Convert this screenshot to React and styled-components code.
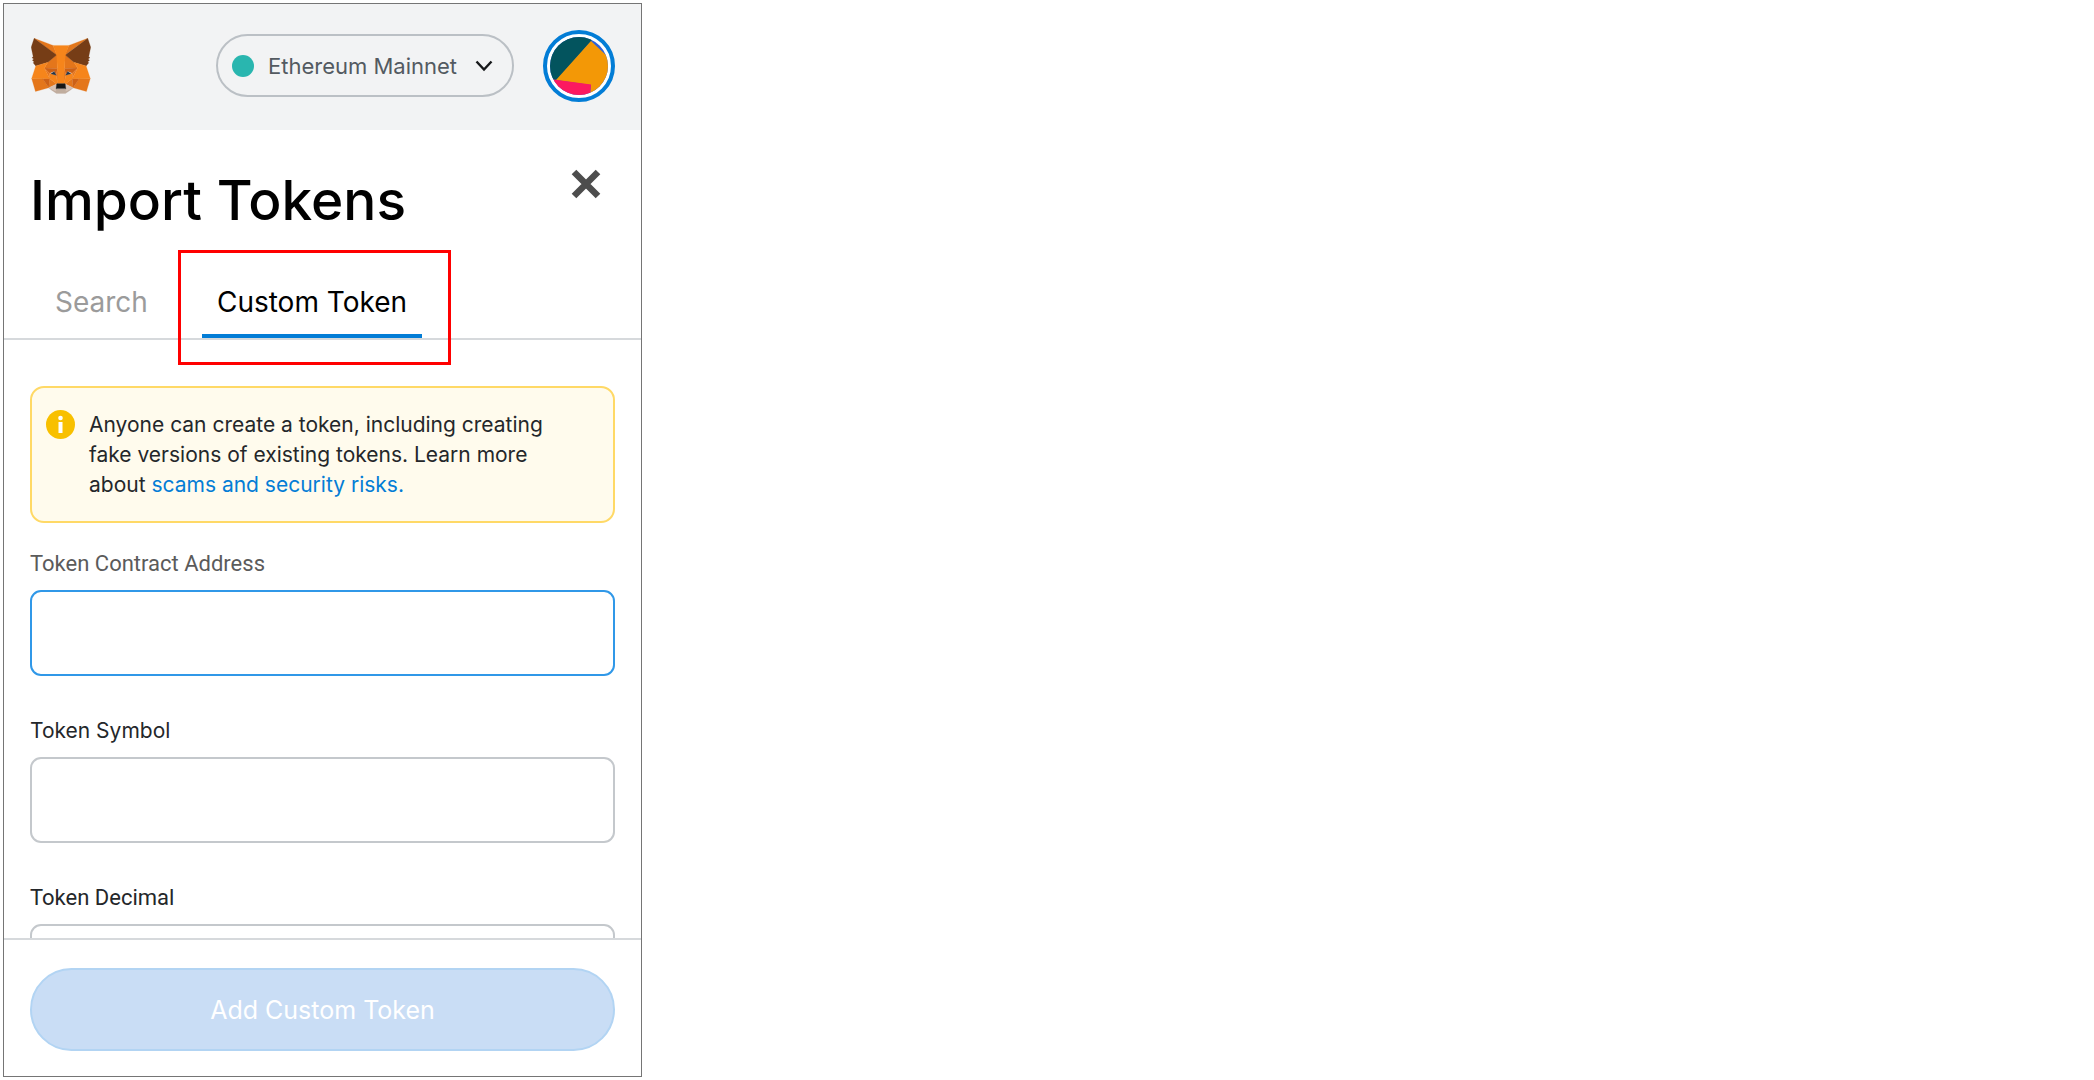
import React, { useState } from 'react';
import styled, { createGlobalStyle } from 'styled-components';

const GlobalStyle = createGlobalStyle`
  * {
    box-sizing: border-box;
  }

  body {
    margin: 0;
    background: #ffffff;
    font-family: Inter, 'Liberation Sans', sans-serif;
    color: #24272a;
  }
`;

const Page = styled.div`
  height: 100vh;
  padding: 3px;
`;

const Popup = styled.main`
  display: flex;
  flex-direction: column;
  width: 639px;
  max-width: 100%;
  height: 100%;
  border: 1px solid #757575;
  background: #ffffff;
`;

const Header = styled.header`
  display: flex;
  align-items: center;
  flex-shrink: 0;
  height: 126px;
  padding: 0 26px 3px 27px;
  background: #f2f3f4;
`;

const FoxLogo = styled.svg`
  width: 60px;
  height: 56px;
  margin-right: auto;
`;

const NetworkButton = styled.button`
  display: flex;
  align-items: center;
  width: 298px;
  height: 63px;
  margin-right: 29px;
  padding: 0 19px 0 14px;
  border: 2px solid #bbc0c5;
  border-radius: 32px;
  background: transparent;
  font-family: inherit;
  font-size: 22px;
  color: #535a61;
  cursor: pointer;
`;

const NetworkDot = styled.span`
  width: 22px;
  height: 22px;
  margin-right: 14px;
  border-radius: 50%;
  background: #29b6af;
`;

const Chevron = styled.svg`
  width: 18px;
  height: 12px;
  margin-left: auto;
`;

const AccountButton = styled.button`
  width: 72px;
  height: 72px;
  padding: 3px;
  border: 4px solid #037dd6;
  border-radius: 50%;
  background: #ffffff;
  cursor: pointer;

  svg {
    display: block;
    width: 100%;
    height: 100%;
  }
`;

const TitleRow = styled.div`
  display: flex;
  justify-content: space-between;
  flex-shrink: 0;
  height: 120px;
  padding: 35px 37px 0 26px;
`;

const Title = styled.h1`
  margin: 0;
  font-size: 55px;
  line-height: 70px;
  font-weight: 500;
  color: #000000;
`;

const CloseButton = styled.button`
  align-self: flex-start;
  width: 36px;
  height: 38px;
  padding: 4px 3px;
  border: none;
  background: transparent;
  cursor: pointer;

  svg {
    display: block;
    width: 100%;
    height: 100%;
  }
`;

const Tabs = styled.div`
  display: flex;
  align-items: flex-end;
  gap: 39px;
  flex-shrink: 0;
  height: 90px;
  padding-left: 36px;
  border-bottom: 2px solid #d6d9dc;
`;

const TabSlot = styled.div`
  position: relative;
`;

const Tab = styled.button`
  height: 72px;
  padding: 4px 15px 0;
  border: none;
  border-bottom: 4px solid ${({ $active }) => ($active ? '#037dd6' : 'transparent')};
  background: transparent;
  font-family: inherit;
  font-size: 28px;
  white-space: nowrap;
  color: ${({ $active }) => ($active ? '#000000' : '#9b9b9b')};
  cursor: pointer;
`;

const Highlight = styled.span`
  position: absolute;
  inset: -16px -29px -27px -24px;
  border: 3px solid #ff0000;
  pointer-events: none;
`;

const Content = styled.div`
  display: flex;
  flex-direction: column;
  flex: 1;
  min-height: 0;
  padding: 46px 26px 0;
  overflow: hidden;
`;

const Notice = styled.div`
  display: flex;
  align-items: flex-start;
  flex-shrink: 0;
  gap: 14px;
  margin-bottom: 27px;
  padding: 22px 14px 21px;
  border: 2px solid #ffd966;
  border-radius: 14px;
  background: #fffbed;
`;

const NoticeIcon = styled.svg`
  flex-shrink: 0;
  width: 29px;
  height: 29px;
`;

const NoticeText = styled.p`
  max-width: 490px;
  margin: 0;
  font-size: 21px;
  line-height: 30px;

  a {
    color: #037dd6;
    text-decoration: none;
  }
`;

const Field = styled.div`
  display: flex;
  flex-direction: column;
  flex-shrink: 0;
  gap: 12px;
  margin-bottom: 41px;
`;

const Label = styled.label`
  font-family: ${({ $plain }) => ($plain ? "Roboto, 'Liberation Sans', sans-serif" : 'inherit')};
  font-size: ${({ $plain }) => ($plain ? 22 : 21)}px;
  line-height: 28px;
  color: ${({ $muted }) => ($muted ? '#5b5b5b' : '#24272a')};
`;

const Input = styled.input`
  width: 100%;
  height: 86px;
  padding: 0 20px;
  border: 2px solid ${({ $active }) => ($active ? '#3098e8' : '#c4c8cc')};
  border-radius: 11px;
  outline: none;
  background: #ffffff;
  font-family: inherit;
  font-size: 22px;
`;

const Footer = styled.footer`
  flex-shrink: 0;
  padding: 28px 26px 25px;
  border-top: 2px solid #d6d9dc;
`;

const SubmitButton = styled.button`
  display: block;
  width: 100%;
  height: 83px;
  border: 2px solid #b2d4f3;
  border-radius: 42px;
  background: #c9ddf5;
  font-family: inherit;
  font-size: 25px;
  color: #ffffff;
`;

const foxShapes = [
  ['#e2761b', '274.1,35.5 174.6,109.4 193,65.8'],
  ['#e4761b', '44.4,35.5 143.1,110.1 125.6,65.8'],
  ['#e4761b', '238.3,206.8 211.8,247.4 268.5,263 284.8,207.7'],
  ['#e4761b', '33.9,207.7 50.1,263 106.8,247.4 80.3,206.8'],
  ['#e4761b', '103.6,138.2 87.8,162.1 144.1,164.6 142.1,104.1'],
  ['#e4761b', '214.9,138.2 175.9,103.4 174.6,164.6 230.8,162.1'],
  ['#e4761b', '106.8,247.4 140.6,230.9 111.4,208.1'],
  ['#e4761b', '177.9,230.9 211.8,247.4 207.1,208.1'],
  ['#d7c1b3', '211.8,247.4 177.9,230.9 180.6,253 180.3,262.3'],
  ['#d7c1b3', '106.8,247.4 138.3,262.3 138.1,253 140.6,230.9'],
  ['#cd6116', '106.8,247.4 111.6,206.8 80.3,207.7'],
  ['#cd6116', '207,206.8 211.8,247.4 238.3,207.7'],
  ['#cd6116', '230.8,162.1 174.6,164.6 179.8,193.5 188.1,176.1 208.1,185.2'],
  ['#cd6116', '110.6,185.2 130.6,176.1 138.8,193.5 144.1,164.6 87.8,162.1'],
  ['#e4751f', '87.8,162.1 111.4,208.1 110.6,185.2'],
  ['#e4751f', '208.1,185.2 207.1,208.1 230.8,162.1'],
  ['#e4751f', '144.1,164.6 138.8,193.5 145.4,227.6 146.9,182.7'],
  ['#e4751f', '174.6,164.6 171.9,182.6 173.1,227.6 179.8,193.5'],
  ['#f6851b', '179.8,193.5 173.1,227.6 177.9,230.9 207.1,208.1 208.1,185.2'],
  ['#f6851b', '110.6,185.2 111.4,208.1 140.6,230.9 145.4,227.6 138.8,193.5'],
  ['#c0ad9e', '180.3,262.3 180.6,253 178.1,250.8 140.4,250.8 138.1,253 138.3,262.3 106.8,247.4 117.8,256.4 140.1,271.9 178.4,271.9 200.8,256.4 211.8,247.4'],
  ['#161616', '177.9,230.9 173.1,227.6 145.4,227.6 140.6,230.9 138.1,253 140.4,250.8 178.1,250.8 180.6,253'],
  ['#763d16', '278.3,114.2 286.8,73.4 274.1,35.5 177.9,106.9 214.9,138.2 267.2,153.5 278.8,140 273.8,136.4 281.8,129.1 275.6,124.3 283.6,118.2'],
  ['#763d16', '31.8,73.4 40.3,114.2 34.9,118.2 42.9,124.3 36.8,129.1 44.8,136.4 39.8,140 51.3,153.5 103.6,138.2 140.6,106.9 44.4,35.5'],
  ['#f6851b', '267.2,153.5 214.9,138.2 230.8,162.1 207.1,208.1 238.3,207.7 284.8,207.7'],
  ['#f6851b', '103.6,138.2 51.3,153.5 33.9,207.7 80.3,207.7 111.4,208.1 87.8,162.1'],
  ['#f6851b', '174.6,164.6 177.9,106.9 193.1,65.8 125.6,65.8 140.6,106.9 144.1,164.6 145.3,182.8 145.4,227.6 173.1,227.6 173.3,182.8'],
  ['#233447', '138.8,193.5 116,187 130.5,178'],
  ['#233447', '179.7,193.5 188,178 202,187'],
];

const fields = [
  { id: 'address', label: 'Token Contract Address', plain: true, muted: true },
  { id: 'symbol', label: 'Token Symbol' },
  { id: 'decimal', label: 'Token Decimal', plain: true },
];

const App = () => {
  const [tab, setTab] = useState('custom');
  const [focused, setFocused] = useState('address');
  const [values, setValues] = useState({ address: '', symbol: '', decimal: '' });

  const handleChange = (id, value) => {
    setValues(prev => ({ ...prev, [id]: value }));
  };

  return (
    <Page>
      <GlobalStyle />
      <Popup>
        <Header>
          <FoxLogo viewBox="31 35 257 238" aria-hidden="true">
            {foxShapes.map(([fill, points]) => (
              <polygon key={points} fill={fill} stroke={fill} strokeLinejoin="round" points={points} />
            ))}
          </FoxLogo>
          <NetworkButton type="button">
            <NetworkDot />
            Ethereum Mainnet
            <Chevron viewBox="0 0 18 12" fill="none" aria-hidden="true">
              <path d="M1.5 1.5 9 9.5l7.5-8" stroke="#16181a" strokeWidth="2.4" />
            </Chevron>
          </NetworkButton>
          <AccountButton type="button" aria-label="Account">
            <svg viewBox="0 0 58 58" aria-hidden="true">
              <defs>
                <clipPath id="avatar">
                  <circle cx="29" cy="29" r="29" />
                </clipPath>
              </defs>
              <g clipPath="url(#avatar)">
                <rect width="58" height="58" fill="#2f62d9" />
                <path d="M-2 18 16 0h28L41 4 7 43-2 42Z" fill="#03545e" />
                <path d="M41 4 58 20v38H40l1-10L6 43Z" fill="#f39806" />
                <path d="M0 42 41 47.5 40 59H0Z" fill="#fc1960" />
              </g>
            </svg>
          </AccountButton>
        </Header>

        <TitleRow>
          <Title>Import Tokens</Title>
          <CloseButton type="button" aria-label="Close">
            <svg viewBox="0 0 30 30" aria-hidden="true">
              <path d="M3 3 27 27M27 3 3 27" stroke="#4d4d4d" strokeWidth="6.5" />
            </svg>
          </CloseButton>
        </TitleRow>

        <Tabs role="tablist">
          <TabSlot>
            <Tab
              type="button"
              role="tab"
              aria-selected={tab === 'search'}
              $active={tab === 'search'}
              onClick={() => setTab('search')}
            >
              Search
            </Tab>
          </TabSlot>
          <TabSlot>
            <Tab
              type="button"
              role="tab"
              aria-selected={tab === 'custom'}
              $active={tab === 'custom'}
              onClick={() => setTab('custom')}
            >
              Custom Token
            </Tab>
            <Highlight />
          </TabSlot>
        </Tabs>

        <Content>
          <Notice>
            <NoticeIcon viewBox="0 0 29 29" aria-hidden="true">
              <circle cx="14.5" cy="14.5" r="14.5" fill="#f8c000" />
              <circle cx="14.5" cy="8" r="2.3" fill="#ffffff" />
              <rect x="12.5" y="12" width="4" height="11" fill="#ffffff" />
            </NoticeIcon>
            <NoticeText>
              Anyone can create a token, including creating fake versions of existing tokens. Learn more
              about <a href="#scams">scams and security risks.</a>
            </NoticeText>
          </Notice>
          {fields.map(field => (
            <Field key={field.id}>
              <Label htmlFor={field.id} $plain={field.plain} $muted={field.muted}>
                {field.label}
              </Label>
              <Input
                id={field.id}
                type="text"
                value={values[field.id]}
                $active={focused === field.id}
                onFocus={() => setFocused(field.id)}
                onChange={(e) => handleChange(field.id, e.target.value)}
              />
            </Field>
          ))}
        </Content>

        <Footer>
          <SubmitButton type="button" disabled>Add Custom Token</SubmitButton>
        </Footer>
      </Popup>
    </Page>
  );
};

export default App;
